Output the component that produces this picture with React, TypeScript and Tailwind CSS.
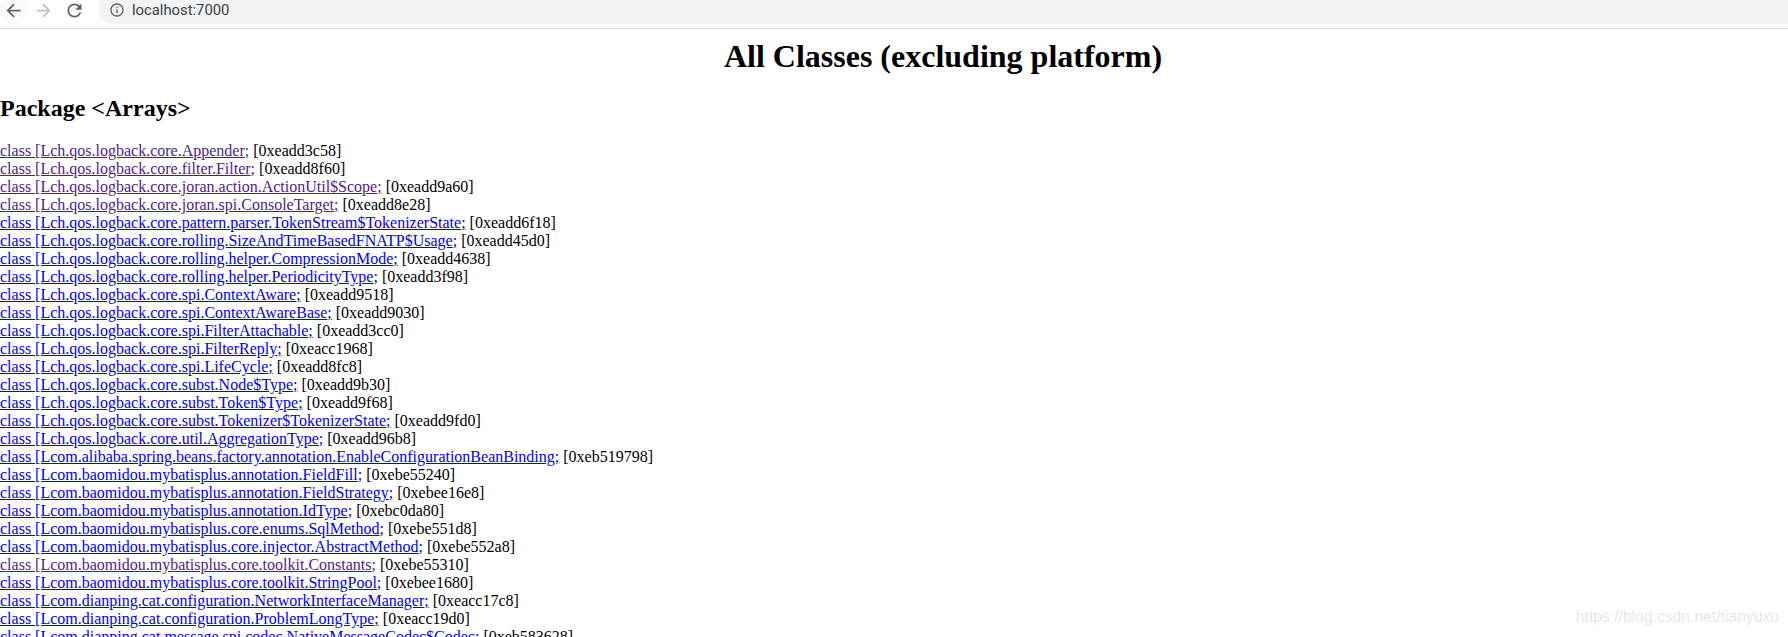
const rows: [string, string, boolean?][] = [
  ['ch.qos.logback.core.Appender', '0xeadd3c58', true],
  ['ch.qos.logback.core.filter.Filter', '0xeadd8f60', true],
  ['ch.qos.logback.core.joran.action.ActionUtil$Scope', '0xeadd9a60', true],
  ['ch.qos.logback.core.joran.spi.ConsoleTarget', '0xeadd8e28', true],
  ['ch.qos.logback.core.pattern.parser.TokenStream$TokenizerState', '0xeadd6f18'],
  ['ch.qos.logback.core.rolling.SizeAndTimeBasedFNATP$Usage', '0xeadd45d0'],
  ['ch.qos.logback.core.rolling.helper.CompressionMode', '0xeadd4638'],
  ['ch.qos.logback.core.rolling.helper.PeriodicityType', '0xeadd3f98'],
  ['ch.qos.logback.core.spi.ContextAware', '0xeadd9518'],
  ['ch.qos.logback.core.spi.ContextAwareBase', '0xeadd9030'],
  ['ch.qos.logback.core.spi.FilterAttachable', '0xeadd3cc0'],
  ['ch.qos.logback.core.spi.FilterReply', '0xeacc1968'],
  ['ch.qos.logback.core.spi.LifeCycle', '0xeadd8fc8'],
  ['ch.qos.logback.core.subst.Node$Type', '0xeadd9b30'],
  ['ch.qos.logback.core.subst.Token$Type', '0xeadd9f68'],
  ['ch.qos.logback.core.subst.Tokenizer$TokenizerState', '0xeadd9fd0'],
  ['ch.qos.logback.core.util.AggregationType', '0xeadd96b8'],
  ['com.alibaba.spring.beans.factory.annotation.EnableConfigurationBeanBinding', '0xeb519798'],
  ['com.baomidou.mybatisplus.annotation.FieldFill', '0xebe55240'],
  ['com.baomidou.mybatisplus.annotation.FieldStrategy', '0xebee16e8'],
  ['com.baomidou.mybatisplus.annotation.IdType', '0xebc0da80'],
  ['com.baomidou.mybatisplus.core.enums.SqlMethod', '0xebe551d8'],
  ['com.baomidou.mybatisplus.core.injector.AbstractMethod', '0xebe552a8'],
  ['com.baomidou.mybatisplus.core.toolkit.Constants', '0xebe55310', true],
  ['com.baomidou.mybatisplus.core.toolkit.StringPool', '0xebee1680'],
  ['com.dianping.cat.configuration.NetworkInterfaceManager', '0xeacc17c8'],
  ['com.dianping.cat.configuration.ProblemLongType', '0xeacc19d0'],
  ['com.dianping.cat.message.spi.codec.NativeMessageCodec$Codec', '0xeb583628'],
]

function Icon({ d, className }: { d: string; className: string }) {
  return (
    <svg viewBox="0 0 24 24" fill="currentColor" className={className}>
      <path d={d} />
    </svg>
  )
}

const back = 'M20 11H7.83l5.59-5.59L12 4l-8 8 8 8 1.41-1.41L7.83 13H20v-2z'
const forward = 'M4 11h12.17l-5.59-5.59L12 4l8 8-8 8-1.41-1.41L16.17 13H4v-2z'
const reload = 'M17.65 6.35A7.958 7.958 0 0012 4c-4.42 0-7.99 3.58-7.99 8s3.57 8 7.99 8c3.73 0 6.84-2.55 7.73-6h-2.08A5.99 5.99 0 0112 18c-3.31 0-6-2.69-6-6s2.69-6 6-6c1.66 0 3.14.69 4.22 1.78L13 11h7V4l-2.35 2.35z'
const info = 'M11 7h2v2h-2zm0 4h2v6h-2zm1-9C6.48 2 2 6.48 2 12s4.48 10 10 10 10-4.48 10-10S17.52 2 12 2zm0 18c-4.41 0-8-3.59-8-8s3.59-8 8-8 8 3.59 8 8-3.59 8-8 8z'

export default function App() {
  return (
    <div className="h-[637px] overflow-hidden bg-white font-['Liberation_Serif',serif] text-black relative">
      <div className="h-[29px] flex items-start border-b border-[#dadce0] overflow-hidden">
        <div className="w-[28px] h-[28px] -mt-[4px] -ml-[1px] rounded-full bg-[#fafafa] flex items-center justify-center shrink-0">
          <Icon d={back} className="w-[21px] h-[21px] text-[#5f6368]" />
        </div>
        <div className="h-[20px] flex items-center shrink-0 gap-[10px] ml-[6px]">
          <Icon d={forward} className="w-[21px] h-[21px] text-[#bdc1c6]" />
          <Icon d={reload} className="w-[21px] h-[21px] text-[#5f6368]" />
        </div>
        <div className="ml-[14px] flex-1 h-[24px] pb-[4px] bg-[#f1f3f4] rounded-bl-[12px] flex items-center pl-[10px]">
          <Icon d={info} className="w-[16px] h-[16px] text-[#5f6368]" />
          <span className="ml-[7px] font-['Roboto',sans-serif] text-[14.8px] text-[#3c4043]">localhost:7000</span>
        </div>
      </div>
      <h1 className="text-[32px] font-bold text-center leading-[37px] mt-[9px] pl-[98px]">All Classes (excluding platform)</h1>
      <h2 className="text-[24px] font-bold leading-[27px] mt-[20px]">Package &lt;Arrays&gt;</h2>
      <div className="mt-[20px] text-[16px] leading-[18px] whitespace-nowrap">
        {rows.map(([name, addr, visited]) => (
          <div key={name}>
            <a href="#" className={visited ? 'underline text-[#551a8b]' : 'underline text-[#0000ee]'}>class [L{name};</a> [{addr}]
          </div>
        ))}
      </div>
      <div className="absolute right-[9px] bottom-[8px] font-['Liberation_Sans',sans-serif] text-[15.7px] text-[#e8e8e8]">https://blog.csdn.net/tianyuxu</div>
    </div>
  )
}
